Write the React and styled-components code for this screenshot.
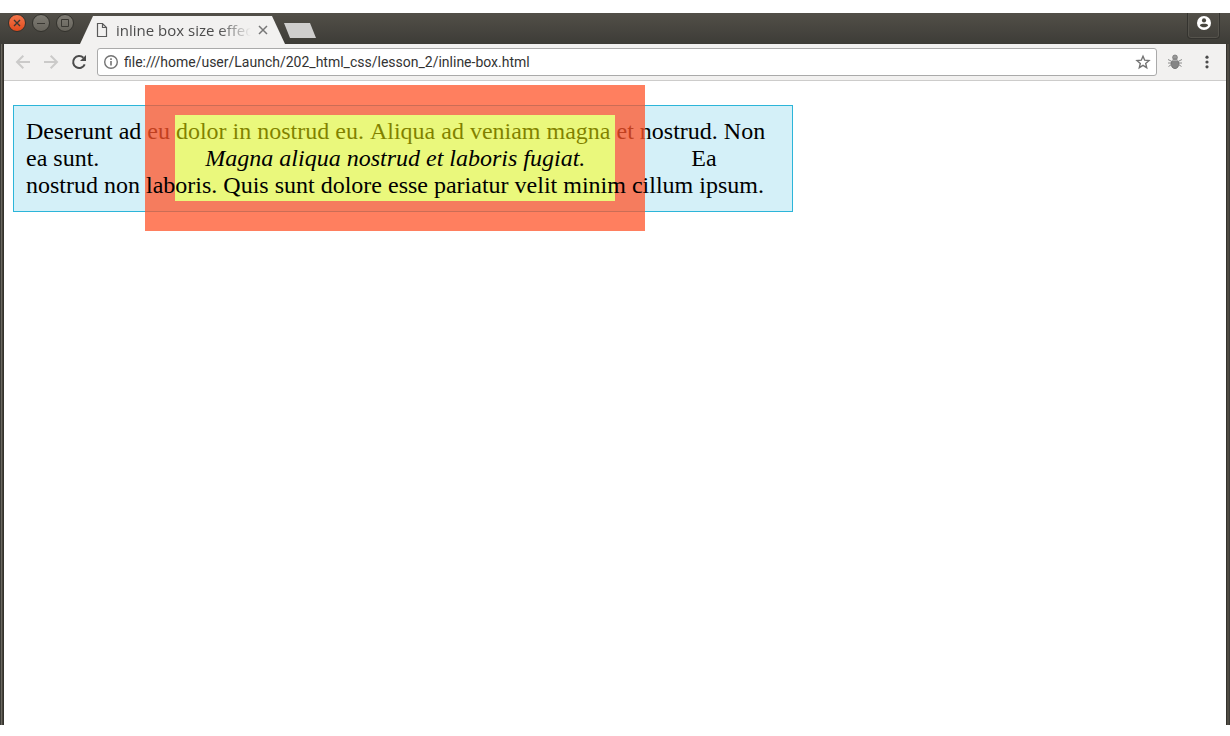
import React from "react";
import styled, { createGlobalStyle } from "styled-components";

const GlobalStyle = createGlobalStyle`
  *, *::before, *::after { box-sizing: border-box; }
  body { margin: 0; background: #fff; }
`;

const Desktop = styled.div`
  display: flex;
  flex-direction: column;
  min-height: 100vh;
  padding: 13px 0 11px;
`;

const BrowserWindow = styled.div`
  flex: 1;
  display: flex;
  flex-direction: column;
  font-family: "Noto Sans", "Open Sans", sans-serif;
  background: linear-gradient(90deg, #3c3b37 0 1px, #6b6860 1px 2px, #46433b 2px 3px, #34322d 3px 50%, #34322d 50% calc(100% - 3px), #4f4b43 calc(100% - 3px) calc(100% - 1px), #3c3b37 calc(100% - 1px));
`;

const TitleBar = styled.header`
  display: flex;
  align-items: flex-start;
  height: 31px;
  padding: 0 10px 0 8px;
  background: linear-gradient(#524f48, #3d3c37);
`;

const WindowControls = styled.div`
  display: flex;
  gap: 6px;
  padding-top: 1px;
`;

const ControlButton = styled.button`
  display: grid;
  place-items: center;
  width: 18px;
  height: 18px;
  padding: 0;
  border: 1px solid #33322d;
  border-radius: 50%;
  color: #3a3833;
  background: ${(p) => (p.$close ? "linear-gradient(#f4774c, #df4a1c)" : "linear-gradient(#7f7c74, #66635b)")};
`;

const Tab = styled.div`
  display: flex;
  align-items: center;
  width: 205px;
  height: 28px;
  margin: 3px 0 0 6px;
  padding: 0 14px;
  background: #f2f1f0;
  clip-path: polygon(0 100%, 13px 0, 192px 0, 100% 100%);
`;

const TabTitle = styled.span`
  flex: 1;
  margin-left: 6px;
  overflow: hidden;
  white-space: nowrap;
  font-family: "Open Sans", "Noto Sans", sans-serif;
  font-size: 15px;
  line-height: 20px;
  color: #4c4c4c;
  mask-image: linear-gradient(90deg, #000 calc(100% - 32px), transparent);
`;

const TabClose = styled.button`
  display: grid;
  place-items: center;
  width: 16px;
  height: 16px;
  margin-left: 4px;
  padding: 0;
  border: 0;
  background: none;
  color: #777;
`;

const NewTab = styled.button`
  width: 32px;
  height: 15px;
  margin-top: 10px;
  margin-left: -1px;
  padding: 0;
  border: 0;
  background: #cfcecd;
  clip-path: polygon(0 0, 26px 0, 100% 100%, 6px 100%);
`;

const ProfileButton = styled.button`
  display: grid;
  place-items: center;
  width: 33px;
  height: 26px;
  margin-left: auto;
  padding: 0 0 5px;
  border: 1px solid #34332f;
  border-top: 0;
  border-radius: 0 0 4px 4px;
  color: #fff;
  background: none;
  box-shadow: inset 0 0 0 1px #55534c;
`;

const Content = styled.div`
  flex: 1;
  display: flex;
  flex-direction: column;
  margin: 0 4px;
  background: #fff;
`;

const Toolbar = styled.nav`
  display: flex;
  align-items: center;
  height: 37px;
  padding: 0 8px;
  background: #f2f1f0;
  border-bottom: 1px solid #cdcccb;
`;

const ToolButton = styled.button`
  display: grid;
  place-items: center;
  width: 22px;
  height: 28px;
  padding: 0;
  border: 0;
  background: none;
  color: ${(p) => (p.disabled ? "#cbcac9" : "#4b4b4b")};
`;

const NavButtons = styled.div`
  display: flex;
  gap: 6px;
`;

const AddressBar = styled.form`
  flex: 1;
  display: flex;
  align-items: center;
  height: 28px;
  margin: 0 7px;
  padding: 0 5px;
  border: 1px solid #aaa;
  border-radius: 3px;
  background: #fff;
`;

const AddressInput = styled.input`
  flex: 1;
  min-width: 0;
  height: 20px;
  margin: 0 0 0 5px;
  padding: 0;
  border: 0;
  outline: 0;
  background: none;
  font-family: Roboto, "Open Sans", sans-serif;
  font-size: 14px;
  line-height: 20px;
  color: #333;
`;

const IconButton = styled.button`
  display: grid;
  place-items: center;
  width: 16px;
  height: 16px;
  padding: 0;
  border: 0;
  background: none;
  color: #737373;
`;

const Extensions = styled.div`
  display: flex;
  gap: 10px;
`;

const Page = styled.main`
  padding: 24px 9px;
  font-family: "Liberation Serif", "Times New Roman", serif;
  font-size: 24px;
  line-height: 27px;
  font-kerning: none;
  color: #000;
`;

const Paragraph = styled.p`
  max-width: 780px;
  margin: 0;
  padding: 12px;
  border: 1px solid #2cb5d9;
  background: #d4f0f8;
`;

const InlineBox = styled.em`
  margin: 40px;
  padding: 30px;
  border: 30px solid rgba(255, 0, 64, 0.5);
  background: rgba(255, 255, 0, 0.5);
`;

function Icon({ size = 16, children }) {
  return (
    <svg width={size} height={size} viewBox={`0 0 ${size} ${size}`} fill="none" stroke="currentColor" strokeWidth="2" aria-hidden="true">
      {children}
    </svg>
  );
}

export default function App() {
  return (
    <Desktop>
      <GlobalStyle />
      <BrowserWindow>
        <TitleBar>
          <WindowControls>
            <ControlButton $close aria-label="Close window">
              <Icon><path d="M5 5l6 6M11 5l-6 6" strokeWidth="1.4" /></Icon>
            </ControlButton>
            <ControlButton aria-label="Minimize window">
              <Icon><path d="M4 8.5h8" strokeWidth="1" /></Icon>
            </ControlButton>
            <ControlButton aria-label="Maximize window">
              <Icon><path d="M4.5 4.5h7v7h-7z" strokeWidth="1" /></Icon>
            </ControlButton>
          </WindowControls>
          <Tab>
            <Icon><path d="M3.5 1.5h5l4 4v9h-9zM8.5 1.5v4h4" stroke="#5a5a5a" strokeWidth="1.2" /></Icon>
            <TabTitle>inline box size effects</TabTitle>
            <TabClose aria-label="Close tab">
              <Icon><path d="M4 4l8 8M12 4l-8 8" strokeWidth="1.5" /></Icon>
            </TabClose>
          </Tab>
          <NewTab aria-label="New tab" />
          <ProfileButton aria-label="Profile">
            <Icon>
              <circle cx="8" cy="8" r="7" fill="currentColor" stroke="none" />
              <circle cx="8" cy="5.4" r="2.1" fill="#48463f" stroke="none" />
              <path d="M3.8 10.2c1.2-1.8 7.2-1.8 8.4 0-1.7 2.7-6.7 2.7-8.4 0z" fill="#48463f" stroke="none" />
            </Icon>
          </ProfileButton>
        </TitleBar>
        <Content>
          <Toolbar>
            <NavButtons>
              <ToolButton disabled aria-label="Back">
                <Icon><path d="M15 8H2M8.3 1.7L2 8l6.3 6.3" /></Icon>
              </ToolButton>
              <ToolButton disabled aria-label="Forward">
                <Icon><path d="M1 8h13M7.7 1.7L14 8l-6.3 6.3" /></Icon>
              </ToolButton>
              <ToolButton aria-label="Reload">
                <Icon>
                  <path d="M13.7 10.3A6 6 0 1 1 12.4 3.8" />
                  <path d="M15 1v6H9z" fill="currentColor" stroke="none" />
                </Icon>
              </ToolButton>
            </NavButtons>
            <AddressBar onSubmit={(e) => e.preventDefault()}>
              <IconButton type="button" aria-label="Site information">
                <Icon>
                  <circle cx="8" cy="8" r="6.3" strokeWidth="1.4" />
                  <path d="M8 7v4.5M8 4.3v1.6" strokeWidth="1.6" />
                </Icon>
              </IconButton>
              <AddressInput aria-label="Address" defaultValue="file:///home/user/Launch/202_html_css/lesson_2/inline-box.html" />
              <IconButton type="button" aria-label="Bookmark this page">
                <Icon><path d="M8 2.2l1.7 4 4.3.4-3.3 2.8 1 4.3L8 11.4l-3.7 2.3 1-4.3L2 6.6l4.3-.4z" strokeWidth="1.4" /></Icon>
              </IconButton>
            </AddressBar>
            <Extensions>
              <ToolButton aria-label="Debug extension">
                <Icon>
                  <path d="M1 5.5l3 1.5M15 5.5l-3 1.5M1 9h14M1.5 12.5L4 10.8M14.5 12.5L12 10.8" stroke="#8c8c8c" strokeWidth="1" />
                  <circle cx="8" cy="3.4" r="2.4" fill="#999" stroke="#777" strokeWidth="0.8" />
                  <ellipse cx="8" cy="9.8" rx="3.9" ry="4.8" fill="#858585" stroke="#686868" strokeWidth="0.8" />
                  <path d="M5 6.2h6" stroke="#ccc" strokeWidth="0.8" />
                </Icon>
              </ToolButton>
              <ToolButton aria-label="Menu">
                <Icon>
                  <g fill="currentColor" stroke="none">
                    <circle cx="8" cy="3.2" r="1.6" />
                    <circle cx="8" cy="8" r="1.6" />
                    <circle cx="8" cy="12.8" r="1.6" />
                  </g>
                </Icon>
              </ToolButton>
            </Extensions>
          </Toolbar>
          <Page>
            <Paragraph>
              Deserunt ad eu dolor in nostrud eu. Aliqua ad veniam magna et nostrud. Non ea sunt.{" "}
              <InlineBox>Magna aliqua nostrud et laboris fugiat.</InlineBox> Ea nostrud non laboris.
              Quis sunt dolore esse pariatur velit minim cillum ipsum.
            </Paragraph>
          </Page>
        </Content>
      </BrowserWindow>
    </Desktop>
  );
}
